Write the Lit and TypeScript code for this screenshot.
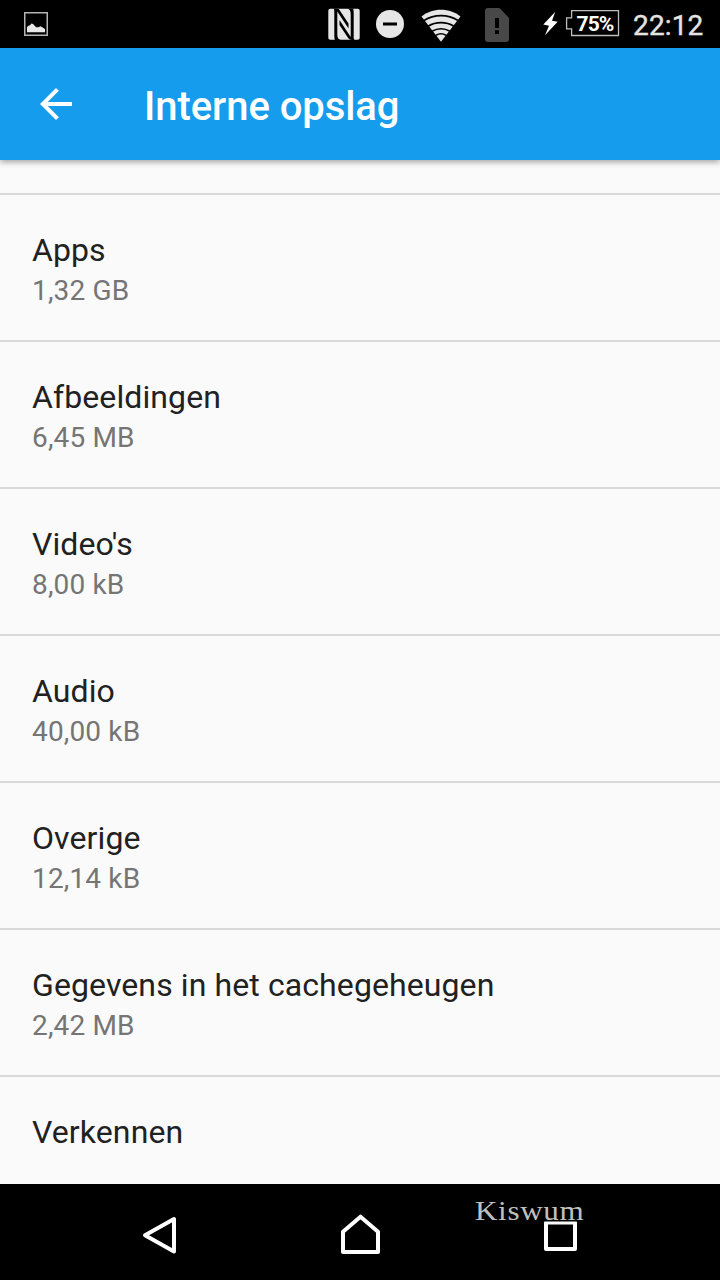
import { LitElement, html, css } from "lit";
import { customElement } from "lit/decorators.js";

interface Entry {
  label: string;
  size?: string;
}

const ENTRIES: Entry[] = [
  { label: "Apps", size: "1,32 GB" },
  { label: "Afbeeldingen", size: "6,45 MB" },
  { label: "Video's", size: "8,00 kB" },
  { label: "Audio", size: "40,00 kB" },
  { label: "Overige", size: "12,14 kB" },
  { label: "Gegevens in het cachegeheugen", size: "2,42 MB" },
  { label: "Verkennen" },
];

@customElement("status-bar")
class StatusBar extends LitElement {
  static styles = css`
    :host {
      display: flex;
      align-items: flex-start;
      height: 48px;
      box-sizing: border-box;
      background: #000;
      padding: 0 16px 0 24px;
    }
    svg {
      display: block;
      height: 48px;
      flex: none;
    }
    .icons {
      display: flex;
      margin-left: auto;
    }
    .battery {
      display: grid;
    }
    .battery > * {
      grid-area: 1 / 1;
    }
    .level {
      font: 700 21px/48px Roboto, sans-serif;
      letter-spacing: -0.9px;
      color: #fff;
      padding-left: 64.5px;
    }
    .clock {
      font: 400 28px/50px Roboto, sans-serif;
      letter-spacing: 0.15px;
      color: #e4e4e4;
      -webkit-text-stroke: 0.4px #e4e4e4;
      padding-top: 1px;
      width: 71px;
      margin-left: 13px;
      white-space: nowrap;
    }
  `;

  render() {
    return html`
      <svg width="24" viewBox="24 0 24 48">
        <rect x="24.75" y="12.75" width="22.5" height="22.5" fill="none" stroke="#b4b4b4" stroke-width="1.5" />
        <path d="M27 32.3V27l1.500-1.300 1.500-.4 1.500-1.800 1.500.6 3.200 3.100h2.200l2.200-1 4.400 2.800v3.300z" fill="#e8e8e8" />
      </svg>
      <div class="icons">
        <svg width="184" viewBox="328 0 184 48">
          <rect x="328.3" y="8.8" width="31.4" height="31" rx="2" fill="#e6e6e6" />
          <path d="M335 40c-.5-1-.7-2.500-.7-5V14c0-3 .2-4.600-.8-5.400h2.500c2 0 3.200.8 4.200 2.400L348.500 23.500v5L337.300 11.500V34c0 3.500.8 5.200 3.400 6z" fill="#000" />
          <path d="M335 40c-.5-1-.7-2.500-.7-5V14c0-3 .2-4.600-.8-5.400h2.500c2 0 3.200.8 4.200 2.400L348.500 23.500v5L337.300 11.500V34c0 3.500.8 5.200 3.400 6z" fill="#000" transform="rotate(180 344 24.300)" />
          <circle cx="390" cy="24" r="14" fill="#e6e6e6" />
          <rect x="383" y="22.500" width="14" height="3" fill="#000" />
          <path d="M421.500 16.500C432 7.500 450 7.500 460.500 16.500L441 41.800z" fill="#e6e6e6" />
          <g fill="none" stroke="#000" stroke-width="1.600">
            <path d="M424 20.500c10-6.500 24-6.500 34 0" />
            <path d="M428 26.200c8-4.800 18-4.800 26 0" />
            <path d="M432 31.200c5.500-3 12.500-3 18 0" />
            <path d="M436 35.200c3-1.700 7-1.700 10 0" />
          </g>
          <path d="M488 8h11.500l9.500 10v21a3 3 0 0 1-3 3h-18a3 3 0 0 1-3-3V11a3 3 0 0 1 3-3z" fill="#484848" />
          <path d="M495 18h4v10h-4zM495 30.300h4V34h-4z" fill="#000" />
        </svg>
      </div>
      <div class="battery">
        <svg width="108" viewBox="512 0 108 48">
          <path d="M555.300 11.700l-12 12.800 5.700 1.200-4 9.600 12.700-13.600-5.700-1z" fill="#fff" />
          <path d="M571.600 10.600h46.900v24.900h-46.900v-6.600h-5v-11h5z" fill="none" stroke="#bdbdbd" stroke-width="1.300" />
        </svg>
        <span class="level">75%</span>
      </div>
      <span class="clock">22:12</span>
    `;
  }
}

@customElement("title-bar")
class TitleBar extends LitElement {
  static styles = css`
    :host {
      display: flex;
      align-items: center;
      height: 112px;
      box-sizing: border-box;
      padding-left: 40px;
      gap: 72px;
      background: #169cec;
      box-shadow: 0 2px 6px rgba(0, 0, 0, 0.36);
      z-index: 1;
    }
    h1 {
      margin: 0;
      padding-top: 6px;
      font: 500 40px/48px Roboto, sans-serif;
      letter-spacing: -0.06px;
      color: #fff;
    }
  `;

  render() {
    return html`
      <svg width="32" height="32" viewBox="0 0 32 32">
        <path d="M32 14v4H7.700l11.200 11.200L16 32 0 16 16 0l2.800 2.800L7.700 14z" fill="#fff" />
      </svg>
      <h1>Interne opslag</h1>
    `;
  }
}

@customElement("storage-list")
class StorageList extends LitElement {
  static styles = css`
    :host {
      display: block;
      flex: 1;
      min-height: 0;
      overflow: hidden;
      background: #fafafa;
      padding-top: 33px;
      box-sizing: border-box;
      font-family: Roboto, sans-serif;
    }
    .row {
      height: 147px;
      box-sizing: border-box;
      border-top: 2px solid #d9d9d9;
      padding: 36px 32px 0;
    }
    .label {
      font-size: 32px;
      line-height: 38px;
      letter-spacing: 0.1px;
      color: #212121;
    }
    .size {
      margin-top: 5px;
      font-size: 28px;
      line-height: 34px;
      letter-spacing: 0.16px;
      color: #757575;
    }
  `;

  render() {
    return ENTRIES.map(
      (e) => html`
        <div class="row">
          <div class="label">${e.label}</div>
          ${e.size ? html`<div class="size">${e.size}</div>` : null}
        </div>
      `
    );
  }
}

@customElement("nav-bar")
class NavBar extends LitElement {
  static styles = css`
    :host {
      display: grid;
      grid-template-columns: 200px 200px 200px;
      justify-content: center;
      justify-items: center;
      position: relative;
      height: 96px;
      background: #000;
    }
    svg {
      display: block;
    }
    .signature {
      position: absolute;
      left: 475px;
      top: 11px;
      font: 400 28px/32px "Liberation Serif", serif;
      letter-spacing: 0.6px;
      color: #c0c0c0;
      transform-origin: 0 0;
      transform: scaleX(1.11);
    }
  `;

  render() {
    return html`
      <svg width="60" height="96" viewBox="130 1184 60 96">
        <path d="M174 1219v32.500L145 1235.300z" fill="none" stroke="#fff" stroke-width="4" stroke-linejoin="round" />
      </svg>
      <svg width="60" height="96" viewBox="330 1184 60 96">
        <path d="M343 1252v-20.300l17.500-15 17.500 15V1252z" fill="none" stroke="#fff" stroke-width="4" stroke-linejoin="round" />
      </svg>
      <svg width="60" height="96" viewBox="530 1184 60 96">
        <path d="M546 1222.500h29v26.500h-29z" fill="none" stroke="#fff" stroke-width="4" stroke-linejoin="round" />
        <path d="M544 1220h33v1.500h-33z" fill="#000" />
      </svg>
      <span class="signature">Kiswum</span>
    `;
  }
}

@customElement("app-root")
class AppRoot extends LitElement {
  static styles = css`
    :host {
      display: flex;
      flex-direction: column;
      width: 720px;
      height: 1280px;
      overflow: hidden;
      background: #000;
    }
  `;

  render() {
    return html`
      <status-bar></status-bar>
      <title-bar></title-bar>
      <storage-list></storage-list>
      <nav-bar></nav-bar>
    `;
  }
}
